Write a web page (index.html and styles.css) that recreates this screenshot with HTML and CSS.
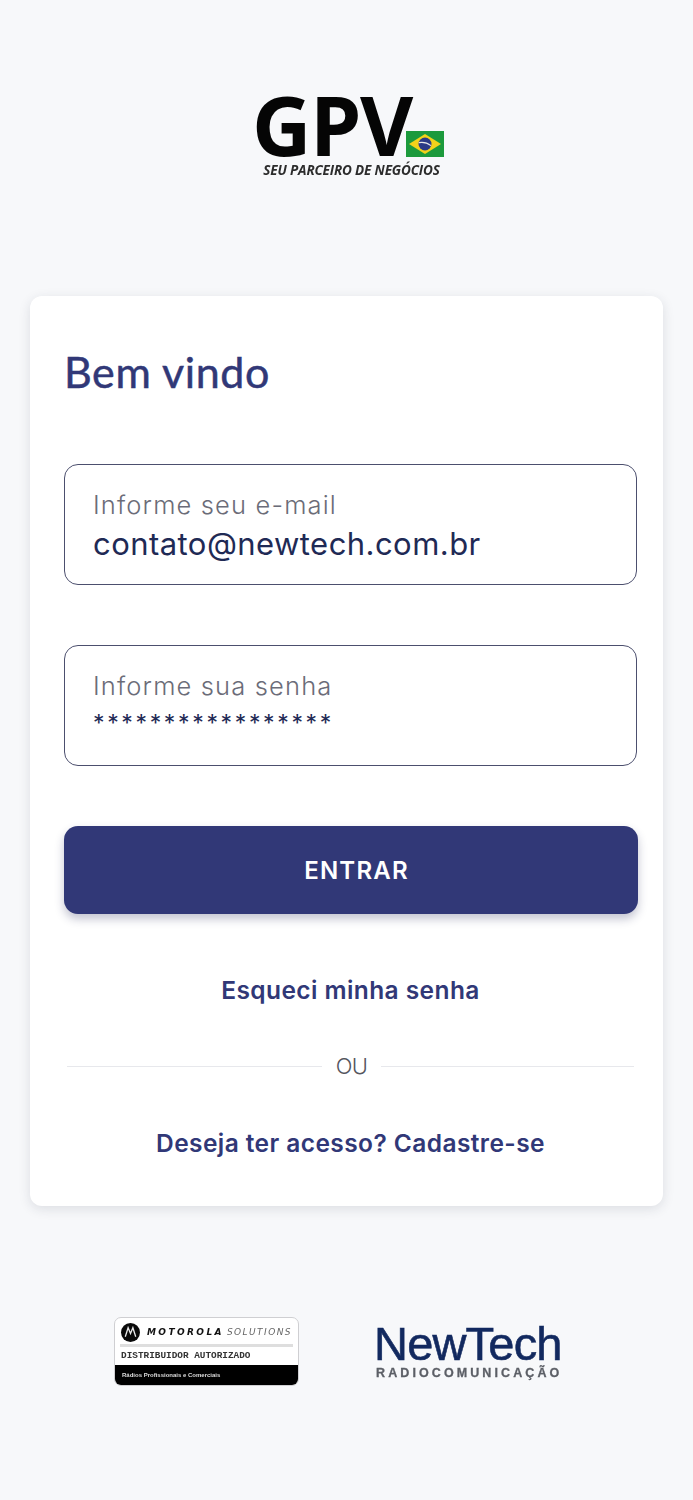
FILE: index.html
```html
<!DOCTYPE html>
<html lang="pt-BR">
<head>
<meta charset="utf-8">
<title>GPV</title>
<link rel="stylesheet" href="styles.css">
</head>
<body>
<main class="page">
  <header class="brand">
    <div class="brand-mark">
      <span class="brand-name">GPV</span>
      <svg class="flag" viewBox="0 0 38 26" aria-hidden="true">
        <rect width="38" height="26" fill="#1c9a3c"/>
        <polygon points="19,3 35,13 19,23 3,13" fill="#f2d21a"/>
        <circle cx="19" cy="13" r="6.5" fill="#2b3a86"/>
        <path d="M12.8 11.6c4-.8 8.6.2 12.2 3" stroke="#e8e8e8" stroke-width="1.2" fill="none"/>
      </svg>
    </div>
    <div class="brand-tag">SEU PARCEIRO DE NEGÓCIOS</div>
  </header>

  <section class="card">
    <h1 class="title">Bem vindo</h1>
    <div class="field">
      <span class="field-label">Informe seu e-mail</span>
      <span class="field-value">contato@newtech.com.br</span>
    </div>
    <div class="field field-password">
      <span class="field-label">Informe sua senha</span>
      <span class="field-value field-value-secret">*****************</span>
    </div>
    <button class="submit" type="button">ENTRAR</button>
    <a class="link link-forgot">Esqueci minha senha</a>
    <div class="divider"><span class="divider-line"></span><span class="divider-text">OU</span><span class="divider-line"></span></div>
    <a class="link link-signup">Deseja ter acesso? Cadastre-se</a>
  </section>

  <footer class="partners">
    <div class="moto">
      <div class="moto-head">
        <svg class="moto-icon" viewBox="0 0 20 20" aria-hidden="true">
          <circle cx="10" cy="10" r="10" fill="#0a0a0a"/>
          <path d="M4.5 14.5 7.5 5l2.5 6 2.5-6 3 9.5" stroke="#e8e8e8" stroke-width="1.4" fill="none"/>
        </svg>
        <span class="moto-name">MOTOROLA</span><span class="moto-sol">SOLUTIONS</span>
      </div>
      <div class="moto-rule"></div>
      <div class="moto-dist">DISTRIBUIDOR AUTORIZADO</div>
      <div class="moto-strip">Rádios Profissionais e Comerciais</div>
    </div>
    <div class="newtech">
      <div class="newtech-name">NewTech</div>
      <div class="newtech-sub">RADIOCOMUNICAÇÃO</div>
    </div>
  </footer>
</main>
</body>
</html>
```
FILE: styles.css
```css
* { box-sizing: border-box; }
html, body { margin: 0; padding: 0; }
body {
  background: #f7f8fa;
  font-family: "Inter", "Liberation Sans", sans-serif;
  color: #313877;
}
.page {
  height: 1500px;
  padding: 0 30px;
  overflow: hidden;
}

/* Brand logo */
.brand {
  height: 296px;
  padding-top: 88px;
  display: flex;
  flex-direction: column;
  align-items: center;
}
.brand-mark {
  display: flex;
  align-items: flex-end;
  height: 73px;
  margin-left: 3px;
  filter: blur(.6px);
}
.brand-name {
  font-family: "Open Sans", sans-serif;
  font-weight: 700;
  font-size: 82px;
  line-height: 73px;
  letter-spacing: -1.4px;
  color: #050505;
}
.flag {
  width: 38px;
  height: 26px;
  margin-left: -6px;
  margin-bottom: 4px;
}
.brand-tag {
  font-family: "Open Sans", sans-serif;
  font-weight: 700;
  font-style: italic;
  font-size: 13.5px;
  line-height: 14px;
  margin-top: 2px;
  margin-left: 10px;
  letter-spacing: -.15px;
  color: #2c2c2c;
  filter: blur(.5px);
}

/* Card */
.card {
  height: 910px;
  padding: 0 26px 0 34px;
  background: #fff;
  border-radius: 12px;
  box-shadow: 0 3px 12px rgba(40, 44, 70, .13);
  display: flex;
  flex-direction: column;
}
.title {
  margin: 46px 0 62px;
  font-family: "Lato", sans-serif;
  font-weight: 400;
  font-size: 43px;
  line-height: 60px;
  letter-spacing: .6px;
  -webkit-text-stroke: .5px #313877;
  color: #313877;
}
.field {
  height: 121px;
  padding: 22px 28px 0;
  border: 1px solid #4c4f6e;
  border-radius: 14px;
  display: flex;
  flex-direction: column;
}
.field-password { margin-top: 60px; }
.field-label {
  font-size: 25.5px;
  line-height: 36px;
  font-weight: 300;
  letter-spacing: 1.15px;
  color: #6b6c78;
}
.field-value {
  font-size: 31px;
  line-height: 42px;
  font-weight: 400;
  letter-spacing: .45px;
  color: #1f2a55;
}
.field-value-secret {
  font-size: 23px;
  line-height: 38px;
  letter-spacing: 2.65px;
  font-weight: 400;
}
.submit {
  margin-top: 60px;
  height: 88px;
  width: 574px;
  flex: none;
  border: 0;
  border-radius: 14px;
  background: #313877;
  box-shadow: 0 5px 10px rgba(40, 44, 90, .28);
  color: #fff;
  font-family: inherit;
  font-weight: 600;
  font-size: 24px;
  letter-spacing: 1.2px;
  padding-left: 17px;
}
.link {
  text-align: center;
  font-weight: 600;
  font-size: 24.5px;
  line-height: 36px;
  letter-spacing: .42px;
  color: #313877;
}
.link-forgot { margin-top: 58px; }
.link-signup { margin-top: 41px; }
.divider {
  margin: 40px 3px 0;
  height: 36px;
  display: flex;
  align-items: center;
  gap: 14px;
}
.divider-line {
  flex: 1;
  height: 1px;
  background: #e7e8ec;
}
.divider-line:first-child { flex: 255; }
.divider-line:last-child { flex: 253; }
.divider-text {
  font-size: 22px;
  font-weight: 300;
  letter-spacing: -.6px;
  color: #55565f;
}

/* Partner logos */
.partners {
  display: flex;
  align-items: flex-start;
  padding: 111px 0 0 84px;
  gap: 75px;
}
.moto {
  width: 185px;
  height: 69px;
  background: #fff;
  border: 1px solid #cfcfd2;
  border-radius: 7px;
  overflow: hidden;
  display: flex;
  flex-direction: column;
  filter: blur(.7px);
  color: #111;
}
.moto-head {
  height: 27px;
  padding: 4px 0 0 6px;
  display: flex;
  align-items: center;
  font-family: "DejaVu Sans", sans-serif;
  font-style: italic;
  font-size: 9px;
  white-space: nowrap;
}
.moto-icon { width: 19px; height: 19px; margin-right: 7px; flex: none; }
.moto-name { font-weight: 700; letter-spacing: 2.4px; }
.moto-sol { margin-left: 3px; letter-spacing: 1.45px; color: #666; }
.moto-rule {
  height: 3px;
  margin: 2px 5px 0;
  background: #dedede;
}
.moto-dist {
  padding-left: 6px;
  height: 18px;
  font-family: "Liberation Mono", monospace;
  font-weight: 700;
  font-size: 9.4px;
  line-height: 18px;
  color: #333;
}
.moto-strip {
  flex: 1;
  background: #000;
  color: #ddd;
  padding-left: 7px;
  font-family: "Liberation Sans", sans-serif;
  font-weight: 700;
  font-size: 6px;
  line-height: 20px;
}
.newtech { margin-top: 7px; filter: blur(.5px); }
.newtech-name {
  font-family: "Liberation Sans", sans-serif;
  font-size: 47px;
  line-height: 40px;
  letter-spacing: -.8px;
  -webkit-text-stroke: .6px #12295f;
  color: #12295f;
}
.newtech-sub {
  font-family: "Liberation Sans", sans-serif;
  font-weight: 700;
  font-size: 12.5px;
  line-height: 14px;
  margin-top: 2px;
  letter-spacing: 3.1px;
  padding-left: 2px;
  -webkit-text-stroke: .3px #5c5f66;
  color: #5c5f66;
}
```
